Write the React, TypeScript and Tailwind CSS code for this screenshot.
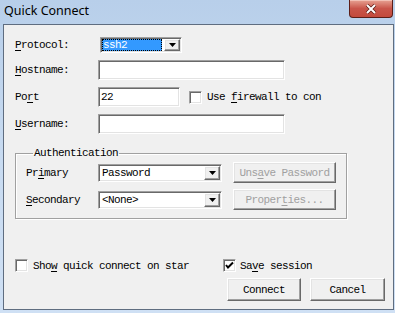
import React from "react";

const mono =
  "font-['Liberation_Mono','DejaVu_Sans_Mono',monospace] text-[11px] tracking-[-0.6px] leading-[12px] whitespace-nowrap";

const sunken =
  "bg-white border border-t-[#a0a0a0] border-l-[#a0a0a0] border-b-white border-r-white shadow-[inset_1px_1px_0_#696969,inset_-1px_-1px_0_#e3e3e3]";

const raised =
  "bg-[#f0f0f0] border border-t-white border-l-white border-b-[#696969] border-r-[#696969] shadow-[inset_-1px_-1px_0_#a0a0a0,inset_1px_1px_0_#e3e3e3]";

const U = ({ c }: { c: string }) => (
  <span className="underline underline-offset-[2px] decoration-1">{c}</span>
);

const Arrow = () => (
  <svg width="7" height="4" viewBox="0 0 7 4">
    <path d="M0 0h7l-3.5 4z" fill="#000" />
  </svg>
);

const DropButton = () => (
  <div className={`${raised} w-[16px] h-full flex items-center justify-center`}>
    <Arrow />
  </div>
);

const Combo = ({ text, className }: { text: string; className: string }) => (
  <div className={`${sunken} ${className} flex items-stretch p-[1px]`}>
    <div className={`${mono} text-black flex-1 flex items-center pl-[2px]`}>{text}</div>
    <DropButton />
  </div>
);

const Checkbox = ({ checked }: { checked?: boolean }) => (
  <div className={`${sunken} w-[13px] h-[13px] flex items-center justify-center`}>
    {checked && (
      <svg width="9" height="9" viewBox="0 0 9 9">
        <path d="M1 4l2 2.5L8 1.5" stroke="#000" strokeWidth="2" fill="none" />
      </svg>
    )}
  </div>
);

export default function App() {
  return (
    <div className="w-[395px] h-[313px] overflow-hidden flex flex-col text-black bg-gradient-to-b from-[#b8cfea] via-[#c8dbf1] to-[#cfe0f4]">
      <div className="h-[24px] flex items-start">
        <span className="ml-[4px] mt-[2px] font-['Noto_Sans',sans-serif] text-[12.5px] leading-[17px] text-black">
          Quick Connect
        </span>
        <div className="ml-auto mr-[2px] w-[44px] h-[18px] rounded-b-[4px] border border-t-0 border-[#5c1e18] bg-gradient-to-b from-[#e6a293] via-[#c9554a] to-[#c34a3c] flex items-center justify-center shadow-[inset_0_1px_0_#f2c1b5]">
          <svg width="12" height="10" viewBox="0 0 12 10">
            <path d="M2 1l8 8M10 1l-8 8" stroke="#5a1a12" strokeWidth="3.4" />
            <path d="M2 1l8 8M10 1l-8 8" stroke="#fff" strokeWidth="2" />
          </svg>
        </div>
      </div>

      <div className="ml-[3px] w-[391px] h-[286px] border border-[#5f6d80] bg-[#f0f0f0] flex flex-col pl-[11px]">
        {/* Protocol */}
        <div className="mt-[12px] h-[16px] flex items-center">
          <div className={`${mono} w-[83px]`}>
            <U c="P" />rotocol:
          </div>
          <div className={`${sunken} ml-[2px] w-[82px] h-[16px] flex items-stretch p-[1px]`}>
            <div className="flex-1 mr-[2px] bg-[#3399ff] outline-1 outline-dotted outline-[#000] -outline-offset-1 flex items-center pl-[1px]">
              <span className={`${mono} text-white`}>ssh2</span>
            </div>
            <DropButton />
          </div>
        </div>

        {/* Hostname */}
        <div className="mt-[7px] h-[20px] flex items-center">
          <div className={`${mono} w-[83px]`}>
            <U c="H" />ostname:
          </div>
          <div className={`${sunken} w-[187px] h-[20px]`} />
        </div>

        {/* Port */}
        <div className="mt-[7px] h-[20px] flex items-center">
          <div className={`${mono} w-[83px]`}>
            Po<U c="r" />t
          </div>
          <div className={`${sunken} w-[82px] h-[20px] flex items-center pl-[2px]`}>
            <span className={mono}>22</span>
          </div>
          <div className="ml-[9px]">
            <Checkbox />
          </div>
          <div className={`${mono} ml-[5px]`}>
            Use <U c="f" />irewall to con
          </div>
        </div>

        {/* Username */}
        <div className="mt-[7px] h-[20px] flex items-center">
          <div className={`${mono} w-[83px]`}>
            <U c="U" />sername:
          </div>
          <div className={`${sunken} w-[187px] h-[20px]`} />
        </div>

        {/* Authentication */}
        <fieldset className="mt-[13px] w-[332px] border border-[#a0a0a0] shadow-[inset_1px_1px_0_#fff,1px_1px_0_#fff] pt-[3px] pb-[8px] pl-[10px]">
          <legend className={`${mono} ml-[7px] px-[1px]`}>Authentication</legend>
          <div className="h-[21px] flex items-center">
            <div className={`${mono} w-[72px]`}>
              Pr<U c="i" />mary
            </div>
            <Combo text="Password" className="w-[124px] h-[18px]" />
            <div className={`${raised} ml-[11px] w-[103px] h-[21px] flex items-center justify-center`}>
              <span className={`${mono} text-[#a0a0a0]`}>
                Uns<U c="a" />ve Password
              </span>
            </div>
          </div>
          <div className="mt-[6px] h-[21px] flex items-center">
            <div className={`${mono} w-[72px]`}>
              <U c="S" />econdary
            </div>
            <Combo text="<None>" className="w-[124px] h-[18px]" />
            <div className={`${raised} ml-[11px] w-[103px] h-[21px] flex items-center justify-center`}>
              <span className={`${mono} text-[#a0a0a0]`}>
                Proper<U c="t" />ies...
              </span>
            </div>
          </div>
        </fieldset>

        {/* Options */}
        <div className="mt-[40px] h-[13px] flex items-center">
          <div className="w-[208px] flex items-center">
            <Checkbox />
            <div className={`${mono} ml-[5px]`}>
              Sho<U c="w" /> quick connect on star
            </div>
          </div>
          <Checkbox checked />
          <div className={`${mono} ml-[4px]`}>
            Sa<U c="v" />e session
          </div>
        </div>

        {/* Buttons */}
        <div className="mt-[6px] h-[23px] flex justify-end gap-[9px] pr-[8px]">
          <div className={`${raised} border-b-[#404040] border-r-[#404040] w-[74px] h-[23px] flex items-center justify-center`}>
            <span className={mono}>Connect</span>
          </div>
          <div className={`${raised} w-[75px] h-[23px] flex items-center justify-center`}>
            <span className={mono}>Cancel</span>
          </div>
        </div>
      </div>
    </div>
  );
}
